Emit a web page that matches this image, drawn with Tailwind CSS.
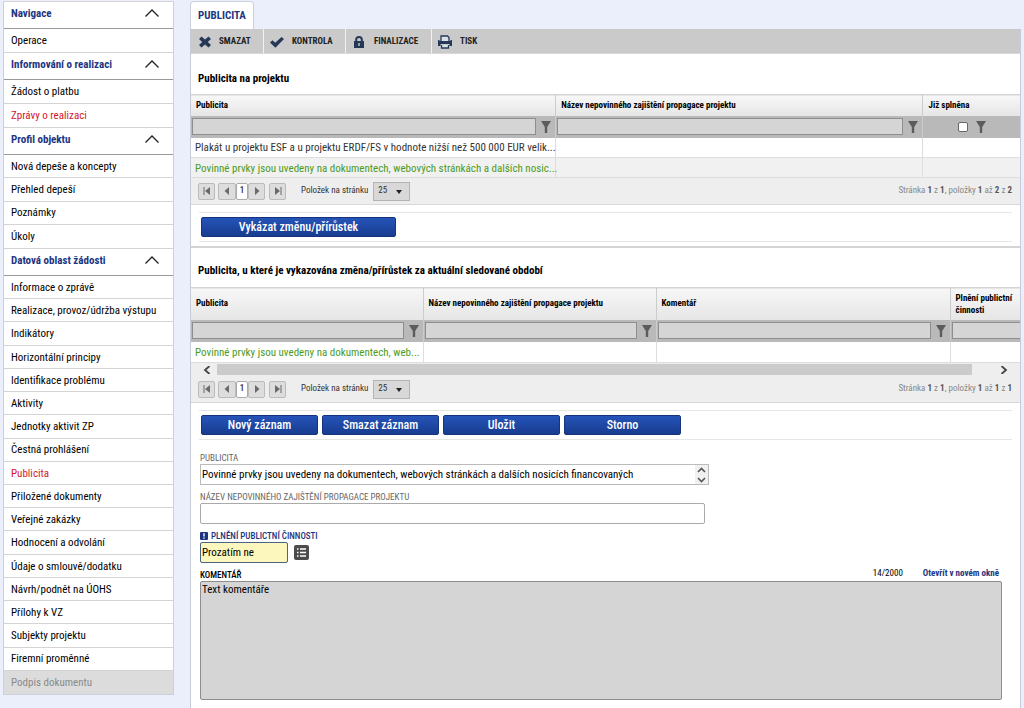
<!DOCTYPE html>
<html lang="cs">
<head>
<meta charset="utf-8">
<meta name="viewport" content="width=device-width, initial-scale=1">
<title>Publicita</title>
<script src="https://cdn.jsdelivr.net/npm/@tailwindcss/browser@4"></script>
</head>
<body class="min-h-screen bg-[#ebeffc] font-['Roboto_Condensed','Liberation_Sans_Narrow',Roboto,sans-serif] text-[11px] text-black">
<svg class="hidden" aria-hidden="true">
  <symbol id="funnel" viewBox="0 0 10 12"><path d="M0 0h10L6.200 6v6H3.800V6z" fill="#5c5c5c"/></symbol>
  <symbol id="chev" viewBox="0 0 14 8"><path d="M.5 7.500 7 1l6.500 6.500" fill="none" stroke="#222" stroke-width="1.300"/></symbol>
  <symbol id="first" viewBox="0 0 8 8"><path d="M.5 0h1v8h-1zM7 0v8L2 4z" fill="#6a6a6a"/></symbol>
  <symbol id="prev" viewBox="0 0 8 8"><path d="M6 0v8L1.500 4z" fill="#6a6a6a"/></symbol>
  <symbol id="next" viewBox="0 0 8 8"><path d="M2 0v8l4.500-4z" fill="#6a6a6a"/></symbol>
  <symbol id="last" viewBox="0 0 8 8"><path d="M6.500 0h1v8h-1zM1 0v8l5-4z" fill="#6a6a6a"/></symbol>
  <symbol id="caret" viewBox="0 0 6 4"><path d="M0 0h6L3 4z" fill="#222"/></symbol>
</svg>
<div class="flex min-h-screen">
  <nav class="mx-[3px] mt-px w-[171px] shrink-0 self-start border border-t-0 border-[#ccd0d8] bg-white">
    <section>
      <button class="flex h-7 w-full items-center justify-between border-y border-t-[#d4d4d4] border-b-[#999] pr-3.5 pl-[7px] pb-px font-bold text-[#1d357f]">Navigace<svg class="mb-1 h-2 w-3.5"><use href="#chev"/></svg></button>
      <div class="grid h-[23px] auto-rows-fr">
        <a href="#" class="flex items-center pt-0.5 pl-[7px]">Operace</a>
      </div>
    </section>
    <section>
      <button class="flex h-7 w-full items-center justify-between border-y border-t-[#d4d4d4] border-b-[#999] pr-3.5 pl-[7px] pb-px font-bold text-[#1d357f]">Informování o realizaci<svg class="mb-1 h-2 w-3.5"><use href="#chev"/></svg></button>
      <div class="grid min-h-[47px] auto-rows-fr divide-y divide-[#d4d4d4]">
        <a href="#" class="flex items-center pt-0.5 pl-[7px]">Žádost o platbu</a>
        <a href="#" class="flex items-center pt-0.5 pl-[7px] text-[#d6142c]">Zprávy o realizaci</a>
      </div>
    </section>
    <section>
      <button class="flex h-7 w-full items-center justify-between border-y border-t-[#d4d4d4] border-b-[#999] pr-3.5 pl-[7px] pb-px font-bold text-[#1d357f]">Profil objektu<svg class="mb-1 h-2 w-3.5"><use href="#chev"/></svg></button>
      <div class="grid min-h-[93px] auto-rows-fr divide-y divide-[#d4d4d4]">
        <a href="#" class="flex items-center pt-0.5 pl-[7px]">Nová depeše a koncepty</a>
        <a href="#" class="flex items-center pt-0.5 pl-[7px]">Přehled depeší</a>
        <a href="#" class="flex items-center pt-0.5 pl-[7px]">Poznámky</a>
        <a href="#" class="flex items-center pt-0.5 pl-[7px]">Úkoly</a>
      </div>
    </section>
    <section>
      <button class="flex h-7 w-full items-center justify-between border-y border-t-[#d4d4d4] border-b-[#999] pr-3.5 pl-[7px] pb-px font-bold text-[#1d357f]">Datová oblast žádosti<svg class="mb-1 h-2 w-3.5"><use href="#chev"/></svg></button>
      <div class="grid min-h-[418px] auto-rows-fr divide-y divide-[#d4d4d4]">
        <a href="#" class="flex items-center pt-0.5 pl-[7px]">Informace o zprávě</a>
        <a href="#" class="flex items-center pt-0.5 pl-[7px]">Realizace, provoz/údržba výstupu</a>
        <a href="#" class="flex items-center pt-0.5 pl-[7px]">Indikátory</a>
        <a href="#" class="flex items-center pt-0.5 pl-[7px]">Horizontální principy</a>
        <a href="#" class="flex items-center pt-0.5 pl-[7px]">Identifikace problému</a>
        <a href="#" class="flex items-center pt-0.5 pl-[7px]">Aktivity</a>
        <a href="#" class="flex items-center pt-0.5 pl-[7px]">Jednotky aktivit ZP</a>
        <a href="#" class="flex items-center pt-0.5 pl-[7px]">Čestná prohlášení</a>
        <a href="#" class="flex items-center pt-0.5 pl-[7px] text-[#d6142c]">Publicita</a>
        <a href="#" class="flex items-center pt-0.5 pl-[7px]">Přiložené dokumenty</a>
        <a href="#" class="flex items-center pt-0.5 pl-[7px]">Veřejné zakázky</a>
        <a href="#" class="flex items-center pt-0.5 pl-[7px]">Hodnocení a odvolání</a>
        <a href="#" class="flex items-center pt-0.5 pl-[7px]">Údaje o smlouvě/dodatku</a>
        <a href="#" class="flex items-center pt-0.5 pl-[7px]">Návrh/podnět na ÚOHS</a>
        <a href="#" class="flex items-center pt-0.5 pl-[7px]">Přílohy k VZ</a>
        <a href="#" class="flex items-center pt-0.5 pl-[7px]">Subjekty projektu</a>
        <a href="#" class="flex items-center pt-0.5 pl-[7px]">Firemní proměnné</a>
        <a href="#" class="flex items-center bg-[#dcdcdc] pt-0.5 pl-[7px] text-[#8a8a8a]">Podpis dokumentu</a>
      </div>
    </section>
  </nav>

  <main class="mr-[3px] ml-[13px] flex min-w-0 flex-1 flex-col pt-px">
    <div class="flex"><a href="#" class="flex h-7 items-center rounded-t-sm border border-b-0 border-[#ccd0d8] bg-white px-[7px] pt-0.5 font-bold text-[#1d357f]">PUBLICITA</a></div>
    <div class="flex-1 border-x border-[#c6cbdb] bg-white">
      <div class="flex h-[25px] divide-x divide-[#f2f2f2] border-b border-[#d8d8d8] bg-[#cacaca] text-[9px] font-bold text-[#222]">
        <button class="flex w-[73px] items-center gap-2 pt-px pl-2"><svg class="size-3" viewBox="0 0 12 12"><path d="M2.500 .5 6 3.600 9.500 .5 12 3 8.800 6 12 9l-2.500 2.500L6 8.400 2.500 11.500 0 9l3.200-3L0 3z" fill="#263858"/></svg>SMAZAT</button>
        <button class="flex w-[82px] items-center gap-2 pt-px pl-1.5"><svg class="h-3 w-3.5" viewBox="0 0 14 12"><path d="M0 6.500 2.500 4.200 5.200 6.800 11.500 1 14 3 5.400 11.700z" fill="#263858"/></svg>KONTROLA</button>
        <button class="flex w-[86px] items-center gap-2.5 pt-px pl-2"><svg class="h-3 w-2.5" viewBox="0 0 10 12"><path d="M0 5h1.200V3.600a3.800 3.600 0 0 1 7.600 0V5H10v7H0zM3.200 5h3.600V3.600a1.800 1.700 0 0 0-3.600 0z" fill="#263858"/><path d="M4.300 7h1.400v3H4.300z" fill="#cacaca"/></svg>FINALIZACE</button>
        <button class="flex items-center gap-2 pt-px pr-3 pl-1.5"><svg class="h-3.5 w-3.5" viewBox="0 0 14 14"><path d="M0 5h1.500v2.500h11V5H14v6h-2.500V9h-9v2H0z" fill="#263858"/><path d="M3 6V1h6.500L11 2.500V6M3.500 10v3h7v-3" fill="#dbe0ea" stroke="#263858" stroke-width="1.300"/><path d="M1 6h12v3H1z" fill="#263858"/></svg>TISK</button>
      </div>

      <section>
        <h2 class="flex h-10 items-center px-[7px] pt-2.5 font-bold">Publicita na projektu</h2>
        <table class="w-full table-fixed border-collapse text-left">
          <colgroup><col class="w-[44%]"><col class="w-[44.300%]"><col></colgroup>
          <thead>
            <tr class="h-[21px] border-t border-[#d4d4d4] bg-linear-to-b from-[#f7f7f7] to-[#e6e6e6] text-[9px]">
              <th class="px-[5px] py-0">Publicita</th><th class="border-l border-[#ccc] px-[5px] py-0">Název nepovinného zajištění propagace projektu</th><th class="border-l border-[#ccc] px-[5px] py-0">Již splněna</th>
            </tr>
            <tr class="h-[22px] bg-[#b9b9b9]">
              <td class="p-0 pl-px"><div class="flex items-center gap-[5px]"><input aria-label="Filtr Publicita" class="h-[17px] min-w-0 flex-1 border border-[#8e8e8e] bg-[#d5d5d5]"><button aria-label="Filtrovat" class="w-3.5"><svg class="h-3 w-2.5"><use href="#funnel"/></svg></button></div></td>
              <td class="border-l border-[#ccc] p-0 pl-px"><div class="flex items-center gap-[5px]"><input aria-label="Filtr Název" class="h-[17px] min-w-0 flex-1 border border-[#8e8e8e] bg-[#d5d5d5]"><button aria-label="Filtrovat" class="w-3.5"><svg class="h-3 w-2.5"><use href="#funnel"/></svg></button></div></td>
              <td class="border-l border-[#ccc] p-0"><div class="flex items-center justify-center gap-2"><input type="checkbox" aria-label="Již splněna" class="size-[10px] appearance-none rounded-xs border border-[#666] bg-white"><button aria-label="Filtrovat"><svg class="h-3 w-2.5"><use href="#funnel"/></svg></button></div></td>
            </tr>
          </thead>
          <tbody>
            <tr class="h-5 text-[#333]"><td class="pt-0.5 pr-0 pb-0 pl-1 leading-4 whitespace-nowrap">Plakát u projektu ESF a u projektu ERDF/FS v hodnote nižší než 500 000 EUR velik...</td><td class="border-l border-[#ddd]"></td><td class="border-l border-[#ddd]"></td></tr>
            <tr class="h-5 border-y border-[#ddd] bg-[#f1f1f1] text-[#4c9a1c]"><td class="pt-0.5 pr-0 pb-0 pl-1 leading-4 whitespace-nowrap">Povinné prvky jsou uvedeny na dokumentech, webových stránkách a dalších nosic...</td><td class="border-l border-[#ddd]"></td><td class="border-l border-[#ddd]"></td></tr>
          </tbody>
        </table>
        <div class="flex h-[27px] items-center border-b border-[#d8d8d8] bg-[#eee] pr-2 pl-[7px] text-[9px] text-[#333]">
          <button aria-label="První" class="mr-[3px] flex h-[17px] w-[17px] items-center justify-center rounded-xs border border-[#bbb] bg-[#ddd]"><svg class="size-2"><use href="#first"/></svg></button>
          <button aria-label="Předchozí" class="flex h-[17px] w-[18px] items-center justify-center rounded-xs border border-[#bbb] bg-[#ddd]"><svg class="size-2"><use href="#prev"/></svg></button>
          <button class="h-[17px] w-3 rounded-xs border border-[#aaa] bg-white font-medium">1</button>
          <button aria-label="Další" class="mr-1 flex h-[17px] w-[17px] items-center justify-center rounded-xs border border-[#bbb] bg-[#ddd]"><svg class="size-2"><use href="#next"/></svg></button>
          <button aria-label="Poslední" class="flex h-[17px] w-[17px] items-center justify-center rounded-xs border border-[#bbb] bg-[#ddd]"><svg class="size-2"><use href="#last"/></svg></button>
          <label for="ps1" class="mr-[5px] ml-[15px]">Položek na stránku</label>
          <span class="relative"><select id="ps1" class="block h-[19px] w-[37px] appearance-none border border-[#b4b4b4] bg-[#d8d8d8] pl-1"><option>25</option></select><svg class="pointer-events-none absolute top-2 right-2 h-1 w-1.5"><use href="#caret"/></svg></span>
          <p class="ml-auto text-[#888]">Stránka <b class="text-[#555]">1</b> z <b class="text-[#555]">1</b>, položky <b class="text-[#555]">1</b> až <b class="text-[#555]">2</b> z <b class="text-[#555]">2</b></p>
        </div>
        <div class="mx-2 mt-[7px] mb-1 flex h-[30px] items-center border-y border-[#e6e6e6] pl-0.5"><button class="h-5 w-[195px] rounded-xs border border-[#15347e] bg-linear-to-b from-[#2554b8] to-[#183c90] text-xs leading-none font-medium text-white">Vykázat změnu/přírůstek</button></div>
      </section>

      <section class="border-t-2 border-[#d4d4d4]">
        <h2 class="flex h-[39px] items-center px-[7px] pt-2 font-bold">Publicita, u které je vykazována změna/přírůstek za aktuální sledované období</h2>
        <div class="overflow-hidden">
        <table class="w-[900px] table-fixed border-collapse text-left">
          <colgroup><col class="w-[232px]"><col class="w-[233px]"><col class="w-[294px]"><col></colgroup>
          <thead>
            <tr class="h-8 border-t border-[#d4d4d4] bg-linear-to-b from-[#f7f7f7] to-[#e6e6e6] text-[9px]">
              <th class="px-[5px] py-0">Publicita</th><th class="border-l border-[#ccc] px-[5px] py-0">Název nepovinného zajištění propagace projektu</th><th class="border-l border-[#ccc] px-[5px] py-0">Komentář</th><th class="border-l border-[#ccc] px-[5px] py-0 leading-3">Plnění publictní<br>činnosti</th>
            </tr>
            <tr class="h-[22px] bg-[#b9b9b9]">
              <td class="p-0 pl-px"><div class="flex items-center gap-[5px]"><input aria-label="Filtr Publicita" class="h-[17px] min-w-0 flex-1 border border-[#8e8e8e] bg-[#d5d5d5]"><button aria-label="Filtrovat" class="w-3.5"><svg class="h-3 w-2.5"><use href="#funnel"/></svg></button></div></td>
              <td class="border-l border-[#ccc] p-0 pl-px"><div class="flex items-center gap-[5px]"><input aria-label="Filtr Název" class="h-[17px] min-w-0 flex-1 border border-[#8e8e8e] bg-[#d5d5d5]"><button aria-label="Filtrovat" class="w-3.5"><svg class="h-3 w-2.5"><use href="#funnel"/></svg></button></div></td>
              <td class="border-l border-[#ccc] p-0 pl-px"><div class="flex items-center gap-[5px]"><input aria-label="Filtr Komentář" class="h-[17px] min-w-0 flex-1 border border-[#8e8e8e] bg-[#d5d5d5]"><button aria-label="Filtrovat" class="w-3.5"><svg class="h-3 w-2.5"><use href="#funnel"/></svg></button></div></td>
              <td class="border-l border-[#ccc] p-0 pl-px"><div class="flex items-center gap-[5px]"><input aria-label="Filtr Plnění" class="h-[17px] min-w-0 flex-1 border border-[#8e8e8e] bg-[#d5d5d5]"><button aria-label="Filtrovat" class="w-3.5"><svg class="h-3 w-2.5"><use href="#funnel"/></svg></button></div></td>
            </tr>
          </thead>
          <tbody>
            <tr class="h-[21px] border-b border-[#ddd] text-[#4c9a1c]"><td class="pt-0.5 pr-0 pb-0 pl-1 leading-4 whitespace-nowrap">Povinné prvky jsou uvedeny na dokumentech, web...</td><td class="border-l border-[#ddd]"></td><td class="border-l border-[#ddd]"></td><td class="border-l border-[#ddd]"></td></tr>
          </tbody>
        </table>
        </div>
        <div class="flex h-[13px] items-center bg-[#eee] px-3">
          <button aria-label="Posunout vlevo" class="w-[14px]"><svg class="h-2 w-2" viewBox="0 0 8 8"><path d="M6.500 0 2 4l4.500 4" fill="none" stroke="#444" stroke-width="1.800"/></svg></button>
          <div class="mr-7 h-[11px] flex-1 bg-[#cbcbcb]"></div>
          <button aria-label="Posunout vpravo"><svg class="h-2 w-2" viewBox="0 0 8 8"><path d="M1.500 0 6 4 1.500 8" fill="none" stroke="#444" stroke-width="1.800"/></svg></button>
        </div>
        <div class="flex h-[27px] items-center border-b border-[#d8d8d8] bg-[#eee] pr-2 pl-[7px] text-[9px] text-[#333]">
          <button aria-label="První" class="mr-[3px] flex h-[17px] w-[17px] items-center justify-center rounded-xs border border-[#bbb] bg-[#ddd]"><svg class="size-2"><use href="#first"/></svg></button>
          <button aria-label="Předchozí" class="flex h-[17px] w-[18px] items-center justify-center rounded-xs border border-[#bbb] bg-[#ddd]"><svg class="size-2"><use href="#prev"/></svg></button>
          <button class="h-[17px] w-3 rounded-xs border border-[#aaa] bg-white font-medium">1</button>
          <button aria-label="Další" class="mr-1 flex h-[17px] w-[17px] items-center justify-center rounded-xs border border-[#bbb] bg-[#ddd]"><svg class="size-2"><use href="#next"/></svg></button>
          <button aria-label="Poslední" class="flex h-[17px] w-[17px] items-center justify-center rounded-xs border border-[#bbb] bg-[#ddd]"><svg class="size-2"><use href="#last"/></svg></button>
          <label for="ps2" class="mr-[5px] ml-[15px]">Položek na stránku</label>
          <span class="relative"><select id="ps2" class="block h-[19px] w-[37px] appearance-none border border-[#b4b4b4] bg-[#d8d8d8] pl-1"><option>25</option></select><svg class="pointer-events-none absolute top-2 right-2 h-1 w-1.5"><use href="#caret"/></svg></span>
          <p class="ml-auto text-[#888]">Stránka <b class="text-[#555]">1</b> z <b class="text-[#555]">1</b>, položky <b class="text-[#555]">1</b> až <b class="text-[#555]">1</b> z <b class="text-[#555]">1</b></p>
        </div>
        <div class="mx-2 mt-[7px] flex h-[30px] items-center gap-1 border-y border-[#e6e6e6] pl-0.5 text-xs leading-none font-medium text-white">
          <button class="h-5 w-[117px] rounded-xs border border-[#15347e] bg-linear-to-b from-[#2554b8] to-[#183c90]">Nový záznam</button>
          <button class="h-5 w-[117px] rounded-xs border border-[#15347e] bg-linear-to-b from-[#2554b8] to-[#183c90]">Smazat záznam</button>
          <button class="h-5 w-[117px] rounded-xs border border-[#15347e] bg-linear-to-b from-[#2554b8] to-[#183c90]">Uložit</button>
          <button class="h-5 w-[117px] rounded-xs border border-[#15347e] bg-linear-to-b from-[#2554b8] to-[#183c90]">Storno</button>
        </div>
      </section>

      <form class="flex flex-col pt-3 pr-[18px] pb-2 pl-[9px]">
        <label for="pub" class="text-[9px] leading-3 text-[#666]">PUBLICITA</label>
        <div class="relative w-[509px]">
          <textarea id="pub" class="block h-[21px] w-full resize-none overflow-hidden border border-[#bbb] px-px py-0.5 leading-4">Povinné prvky jsou uvedeny na dokumentech, webových stránkách a dalších nosicích financovaných</textarea>
          <svg class="pointer-events-none absolute top-px right-px h-[19px] w-[13px] bg-[#f0f0f0]" viewBox="0 0 13 19"><path d="M3 7l3.500-3.500L10 7M3 13l3.500 3.500L10 13" fill="none" stroke="#555" stroke-width="1.600"/></svg>
        </div>
        <label for="naz" class="mt-[6px] text-[9px] leading-3 text-[#666]">NÁZEV NEPOVINNÉHO ZAJIŠTĚNÍ PROPAGACE PROJEKTU</label>
        <input id="naz" class="h-[21px] w-[505px] rounded-xs border border-[#aaa]">
        <label for="pln" class="mt-[6px] flex items-center gap-[3px] text-[9px] leading-3 font-medium text-[#1d357f]"><svg class="size-2" viewBox="0 0 8 8"><rect width="8" height="8" rx="1" fill="#1d357f"/><path d="M3.300 1.200h1.400v3.400H3.300zM3.300 5.500h1.400v1.300H3.300z" fill="#fff"/></svg>PLNĚNÍ PUBLICTNÍ ČINNOSTI</label>
        <div class="flex items-center gap-1.5"><input id="pln" value="Prozatím ne" class="h-[21px] w-[88px] rounded-xs border border-[#4a6484] bg-[#fcf8bd] px-px">
          <button type="button" aria-label="Vybrat ze seznamu"><svg class="size-[15px]" viewBox="0 0 15 15"><rect width="15" height="15" rx="2" fill="#4c4c4c"/><path d="M3 4h1.500M3 7.500h1.500M3 11h1.500M6 4h6M6 7.500h6M6 11h6" stroke="#fff" stroke-width="1.400"/></svg></button></div>
        <div class="mt-[3px] flex items-end"><label for="kom" class="flex-1 text-[9px] leading-3 font-medium">KOMENTÁŘ</label><span class="mr-5 text-[9px] leading-[15px]">14/2000</span><a href="#" class="mr-[3px] text-[9px] leading-[15px] font-bold text-[#1d357f]">Otevřít v novém okně</a></div>
        <textarea id="kom" class="h-[119px] resize-none rounded-xs border border-[#8e8e8e] bg-[#d5d5d5] px-px leading-4">Text komentáře</textarea>
      </form>
    </div>
  </main>
</div>
</body>
</html>
